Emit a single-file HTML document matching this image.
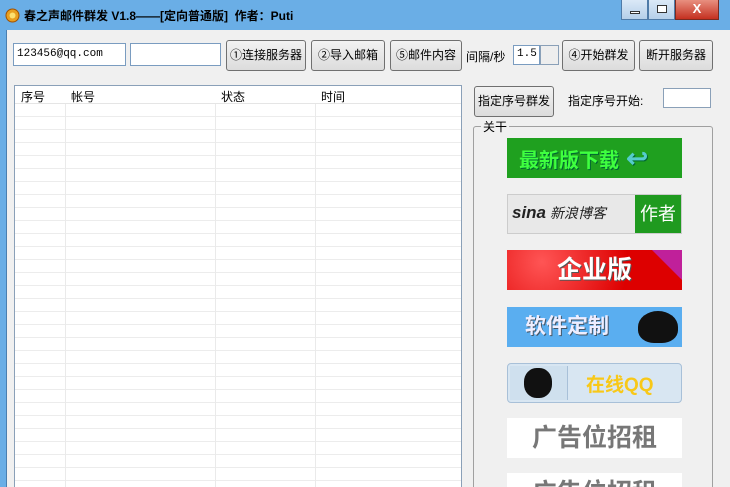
<!DOCTYPE html><html style="width:730px;height:487px;overflow:hidden"><head><meta charset="utf-8"><style>
*{margin:0;padding:0;box-sizing:border-box}
body{width:730px;height:487px;overflow:hidden;background:#6aaee6;font-family:"Liberation Sans","Noto Sans CJK SC",sans-serif;font-size:12px;position:relative}
.abs{position:absolute}
.title{left:24px;top:7px;font-weight:bold;font-size:12px;color:#000}
.client{left:6px;top:30px;width:724px;height:457px;background:#f0f0f0;border-left:1px solid #4a7fb0}
.tb{background:#fff;border:1px solid #7a9cc0;font-family:"Liberation Mono",monospace;font-size:11px;padding:4px 3px;height:23px}
.btn{border:1px solid #707070;border-radius:3px;background:linear-gradient(#f2f2f2,#dcdcdc);text-align:center;line-height:28px;height:31px;font-size:12px;color:#000}
.list{left:14px;top:85px;width:448px;height:402px;background:#fff;border:1px solid #8aa0b8;border-bottom:none;
background-image:repeating-linear-gradient(#fff 0,#fff 12px,#ececec 12px,#ececec 13px);background-position:0 18px}
.hdr{position:absolute;left:0;top:0;width:100%;height:18px;background:#fff;border-bottom:1px solid #e5e5e5}
.hdr span{position:absolute;top:2px}
.vl{position:absolute;top:0;bottom:0;width:1px;background:#eaeaea}
.ad{position:absolute;left:507px;width:175px;height:40px;overflow:hidden}
</style></head><body>
<svg class="abs" style="left:5px;top:8px" width="15" height="15"><circle cx="7.5" cy="7.5" r="6.5" fill="#e8a020" stroke="#a05000"/><circle cx="7.5" cy="7.5" r="3" fill="#fce070"/></svg>
<div class="abs title">春之声邮件群发 V1.8——[定向普通版]&nbsp; 作者：Puti</div>
<div class="abs" style="left:621px;top:0;width:27px;height:20px;background:linear-gradient(#dbe9f7,#b5cfe9);border:1px solid #4f7ba8;border-top:none"><div style="margin:11px 8px 0;width:10px;height:3px;background:#fff;border:1px solid #333"></div></div>
<div class="abs" style="left:648px;top:0;width:27px;height:20px;background:linear-gradient(#dbe9f7,#b5cfe9);border:1px solid #4f7ba8;border-top:none"><div style="margin:5px 8px 0;width:10px;height:8px;border:1px solid #333;background:#fff"></div></div>
<div class="abs" style="left:675px;top:0;width:44px;height:20px;background:linear-gradient(#e89080,#c43020);border:1px solid #7a2a20;border-top:none;color:#fff;font-weight:bold;text-align:center;line-height:18px;font-size:13px">X</div>
<div class="abs client"></div>
<div class="abs tb" style="left:13px;top:43px;width:113px">123456@qq.com</div>
<div class="abs tb" style="left:130px;top:43px;width:91px"></div>
<div class="abs btn" style="left:226px;top:40px;width:80px">①连接服务器</div>
<div class="abs btn" style="left:311px;top:40px;width:74px">②导入邮箱</div>
<div class="abs btn" style="left:390px;top:40px;width:72px">⑤邮件内容</div>
<div class="abs" style="left:466px;top:48px">间隔/秒</div>
<div class="abs tb" style="left:513px;top:45px;width:27px;height:20px;padding:2px 3px">1.5</div>
<div class="abs" style="left:540px;top:45px;width:19px;height:20px;border:1px solid #8aa0b8;background:#eee"></div>
<div class="abs btn" style="left:562px;top:40px;width:73px">④开始群发</div>
<div class="abs btn" style="left:639px;top:40px;width:74px">断开服务器</div>
<div class="abs list"><div class="vl" style="left:50px"></div><div class="vl" style="left:200px"></div><div class="vl" style="left:300px"></div>
<div class="hdr"><span style="left:6px">序号</span><span style="left:56px">帐号</span><span style="left:206px">状态</span><span style="left:306px">时间</span></div></div>
<div class="abs btn" style="left:474px;top:86px;width:80px">指定序号群发</div>
<div class="abs" style="left:568px;top:92px">指定序号开始:</div>
<div class="abs" style="left:663px;top:88px;width:48px;height:20px;background:#fff;border:1px solid #8aa0b8"></div>
<div class="abs" style="left:473px;top:126px;width:240px;height:370px;border:1px solid #a0a0a0;border-radius:3px"></div>
<div class="abs" style="left:481px;top:118px;background:#f0f0f0;padding:0 2px">关干</div>
<div class="ad" style="top:138px;background:#1fa01f;color:#3fff3f;font-weight:bold;font-size:20px;line-height:40px;padding-left:12px;text-shadow:1px 1px 0 #063">最新版下载<span style="color:#5cc;font-size:26px"> ↩</span></div>
<div class="ad" style="top:194px;background:#e8e8e8;border:1px solid #ccc"><span style="position:absolute;left:4px;top:8px;font-size:17px;font-weight:bold;font-style:italic;color:#222">sina<span style="font-size:14px;font-weight:normal"> 新浪博客</span></span><div style="position:absolute;right:0;top:0;width:46px;height:38px;background:#1f9a1f;color:#fff;font-size:18px;line-height:38px;text-align:center">作者</div></div>
<div class="ad" style="top:250px;background:radial-gradient(circle at 20% 30%,#f55 0,#d00 60%);color:#fff;font-weight:bold;font-size:25px;text-align:center;line-height:40px;text-shadow:1px 1px 0 #555">企业版<div style="position:absolute;right:0;top:0;width:0;height:0;border-top:30px solid #c0209a;border-left:30px solid transparent"></div></div>
<div class="ad" style="top:307px;background:#5aaef0;color:#eef;font-weight:bold;font-size:21px;line-height:40px;padding-left:18px;text-shadow:1px 1px 0 #456">软件定制<div style="position:absolute;right:4px;top:4px;width:40px;height:32px;background:#111;border-radius:50% 50% 40% 40%"></div></div>
<div class="ad" style="top:363px;background:#d8e6f2;border:1px solid #a8c0d8;border-radius:4px"><div style="position:absolute;left:2px;top:2px;width:58px;height:34px;background:#cfe0ee;border-right:1px solid #a8c0d8"><div style="margin:2px 14px;width:28px;height:30px;background:#111;border-radius:45%"></div></div><span style="position:absolute;left:78px;top:6px;color:#f8c818;font-size:19px;font-weight:bold">在线QQ</span></div>
<div class="ad" style="top:418px;background:#fff;color:#777;font-weight:bold;font-size:25px;text-align:center;line-height:40px">广告位招租</div>
<div class="ad" style="top:473px;height:14px;background:#fff;color:#777;font-weight:bold;font-size:25px;text-align:center;line-height:40px">广告位招租</div>
</body></html>
